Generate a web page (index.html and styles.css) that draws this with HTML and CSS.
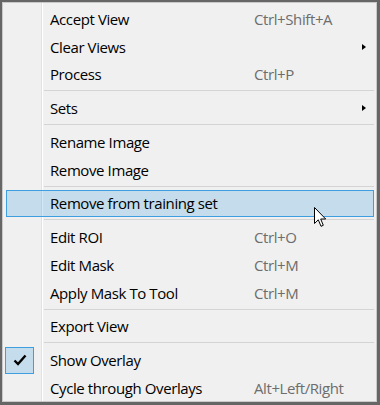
FILE: index.html
```html
<!DOCTYPE html>
<html lang="en">
<head>
    <meta charset="UTF-8">
    <title>Context Menu</title>
    <link rel="stylesheet" href="styles.css">
</head>
<body>
    <div class="menu">
        <div class="item"><span class="icon"></span><span class="label">Accept View</span><span class="key">Ctrl+Shift+A</span><span class="arrow"></span></div>
        <div class="item"><span class="icon"></span><span class="label">Clear Views</span><span class="key"></span><span class="arrow"><span class="tri"></span></span></div>
        <div class="item"><span class="icon"></span><span class="label">Process</span><span class="key">Ctrl+P</span><span class="arrow"></span></div>
        <div class="sep"></div>
        <div class="item"><span class="icon"></span><span class="label">Sets</span><span class="key"></span><span class="arrow"><span class="tri"></span></span></div>
        <div class="sep"></div>
        <div class="item"><span class="icon"></span><span class="label">Rename Image</span><span class="key"></span><span class="arrow"></span></div>
        <div class="item"><span class="icon"></span><span class="label">Remove Image</span><span class="key"></span><span class="arrow"></span></div>
        <div class="sep"></div>
        <div class="item hover"><span class="icon"></span><span class="label">Remove from training set</span><span class="key"></span><span class="arrow"></span>
            <svg class="cursor" width="13" height="21" viewBox="0 0 13 21">
                <path d="M0.5 0.5 L0.5 16.5 L4.3 12.8 L7 19.3 L9.3 18.3 L6.7 12 L11.7 12 Z" fill="#fff" stroke="#000" stroke-width="1" stroke-linejoin="miter"/>
            </svg>
        </div>
        <div class="sep"></div>
        <div class="item"><span class="icon"></span><span class="label">Edit ROI</span><span class="key">Ctrl+O</span><span class="arrow"></span></div>
        <div class="item"><span class="icon"></span><span class="label">Edit Mask</span><span class="key">Ctrl+M</span><span class="arrow"></span></div>
        <div class="item"><span class="icon"></span><span class="label">Apply Mask To Tool</span><span class="key">Ctrl+M</span><span class="arrow"></span></div>
        <div class="sep"></div>
        <div class="item"><span class="icon"></span><span class="label">Export View</span><span class="key"></span><span class="arrow"></span></div>
        <div class="sep"></div>
        <div class="item"><span class="icon checked">
            <svg width="14" height="12" viewBox="0 0 14 12"><path d="M1.5 6.5 L5 10 L12.5 1.5" fill="none" stroke="#000" stroke-width="2.4"/></svg>
        </span><span class="label">Show Overlay</span><span class="key"></span><span class="arrow"></span></div>
        <div class="item"><span class="icon"></span><span class="label">Cycle through Overlays</span><span class="key">Alt+Left/Right</span><span class="arrow"></span></div>
    </div>
</body>
</html>
```

FILE: styles.css
```css
html, body {
    margin: 0;
    height: 100%;
}

body {
    background: #666;
    font-family: "Open Sans", "Noto Sans", sans-serif;
    font-size: 15px;
    letter-spacing: -0.4px;
    padding: 2px 3px 3px 2px;
    box-sizing: border-box;
}

.menu {
    height: 100%;
    box-sizing: border-box;
    border: 1px solid #c9c9c9;
    padding-top: 2px;
    background:
        linear-gradient(to right, transparent 38px, #e2e2e2 38px, #e2e2e2 39px, #fff 39px, #fff 40px, transparent 40px),
        #f0f0f0;
}

.item {
    position: relative;
    display: grid;
    grid-template-columns: 27px 220px 1fr 14px;
    align-items: center;
    height: 27.75px;
    margin: 0 2px 0 3px;
    border: 1px solid transparent;
    box-sizing: border-box;
    color: #000;
}

.item.hover {
    background: rgba(40, 150, 220, 0.22);
    border-color: #3d9ee0;
}

.icon {
    height: 100%;
    display: flex;
    align-items: center;
    justify-content: center;
}

.icon.checked {
    margin: -1px 0 -1px -2px;
    height: 27px;
    background: rgba(40, 150, 220, 0.22);
    border: 1px solid #3d9ee0;
    box-sizing: border-box;
}

.label {
    padding-left: 16px;
    white-space: nowrap;
}

.key {
    color: #6d6d6d;
    white-space: nowrap;
}

.arrow {
    display: flex;
    align-items: center;
    padding-left: 3px;
}

.tri {
    width: 0;
    height: 0;
    border-top: 3.5px solid transparent;
    border-bottom: 3.5px solid transparent;
    border-left: 4px solid #000;
}

.sep {
    height: 6px;
    margin: 0 2px 0 41px;
    box-sizing: border-box;
    padding-top: 2px;
}

.sep::before {
    content: "";
    display: block;
    height: 1px;
    background: #d4d4d4;
}

.cursor {
    position: absolute;
    left: 307px;
    top: 16px;
}
```
